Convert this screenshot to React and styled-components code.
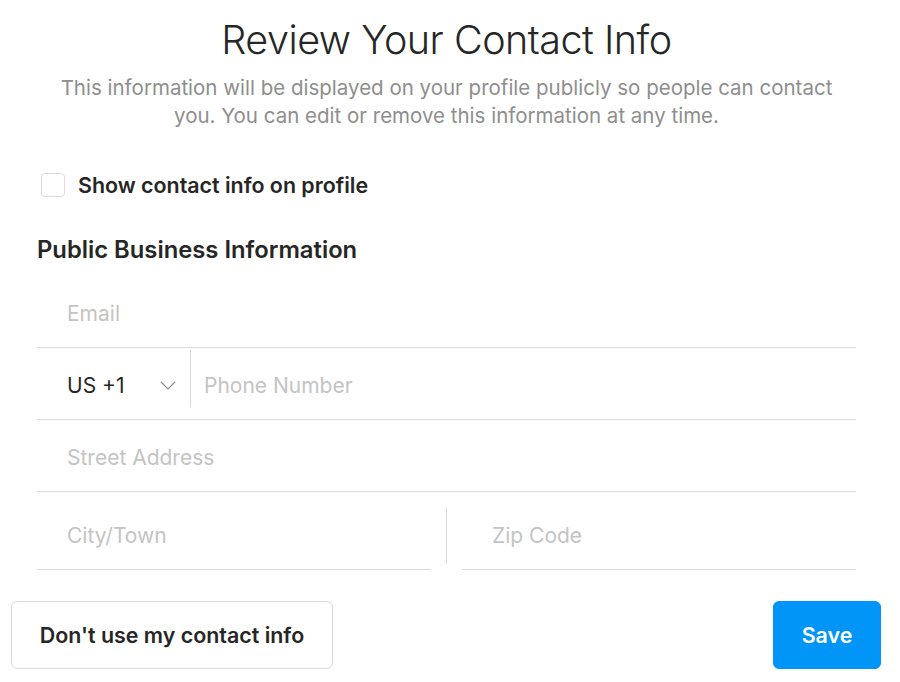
import React from 'react'
import styled, { createGlobalStyle } from 'styled-components'

const GlobalStyle = createGlobalStyle`
	html, body {
		margin: 0;
		padding: 0;
		background: #ffffff;
	}
	body {
		font-family: Inter, "Noto Sans", "Liberation Sans", sans-serif;
		color: #262626;
	}
`

const Page = styled.div`
	width: 900px;
	box-sizing: border-box;
	padding: 15px 19px 0 11px;
	display: flex;
	flex-direction: column;
`

const Form = styled.div`
	display: flex;
	flex-direction: column;
	padding: 0 25px 0 26px;
`

const Title = styled.h1`
	margin: 0;
	font-size: 39.5px;
	line-height: 50px;
	font-weight: 300;
	text-align: center;
	color: #262626;
	letter-spacing: -0.5px;
`

const Subtitle = styled.p`
	margin: 9px auto 0;
	width: 790px;
	font-size: 20.5px;
	line-height: 28px;
	color: #8e8e8e;
	text-align: center;
`

const CheckRow = styled.label`
	display: flex;
	align-items: center;
	gap: 13px;
	margin-top: 42px;
	padding-left: 4px;
	height: 26px;
	font-size: 21.4px;
	font-weight: 600;
	color: #262626;
	cursor: pointer;
`

const Box = styled.span`
	width: 24px;
	height: 24px;
	box-sizing: border-box;
	border: 1px solid #dbdbdb;
	border-radius: 4px;
	background: #fff;
`

const SectionTitle = styled.h2`
	margin: 37px 0 0;
	font-size: 23.8px;
	line-height: 30px;
	font-weight: 600;
	color: #262626;
`

const Fields = styled.div`
	display: flex;
	flex-direction: column;
	margin-top: 11px;
`

const Field = styled.div`
	display: flex;
	align-items: center;
	height: 72px;
	box-sizing: border-box;
	padding-top: 3px;
	border-bottom: 1px solid #dbdbdb;
	flex: ${p => (p.$half ? '1 1 0' : 'none')};
`

const Input = styled.input`
	flex: 1;
	min-width: 0;
	border: none;
	outline: none;
	background: transparent;
	font-family: inherit;
	font-size: 21px;
	color: #262626;
	padding: 0 0 0 ${p => p.$indent || 30}px;

	&::placeholder {
		color: #c4c4c4;
	}
`

const Country = styled.div`
	display: flex;
	align-items: center;
	justify-content: space-between;
	width: 153px;
	box-sizing: border-box;
	padding: 0 14px 0 30px;
	font-size: 21px;
	color: #262626;
	align-self: stretch;
`

const VDivider = styled.span`
	width: 1px;
	background: #dbdbdb;
	align-self: stretch;
	margin: ${p => p.$margin};
`

const SplitRow = styled.div`
	display: flex;
	margin-top: 6px;
`

const Actions = styled.div`
	display: flex;
	justify-content: space-between;
	margin-top: 31px;
`

const Button = styled.button`
	height: 68px;
	width: ${p => p.$width}px;
	box-sizing: border-box;
	border-radius: 6px;
	font-family: inherit;
	font-size: 21.4px;
	font-weight: 600;
	cursor: pointer;
	border: 1px solid ${p => (p.$primary ? '#0095f6' : '#dbdbdb')};
	background: ${p => (p.$primary ? '#0095f6' : '#ffffff')};
	color: ${p => (p.$primary ? '#ffffff' : '#262626')};
`

const Chevron = () => (
	<svg width="16" height="9" viewBox="0 0 16 9" fill="none">
		<polyline points="1,1 8,8 15,1" stroke="#8e8e8e" strokeWidth="1.2" />
	</svg>
)

const App = () => {
	return (
		<Page>
			<GlobalStyle />
			<Form>
				<Title>Review Your Contact Info</Title>
				<Subtitle>
					This information will be displayed on your profile publicly so people can contact
					you. You can edit or remove this information at any time.
				</Subtitle>

				<CheckRow>
					<Box />
					Show contact info on profile
				</CheckRow>

				<SectionTitle>Public Business Information</SectionTitle>

				<Fields>
					<Field>
						<Input placeholder='Email' />
					</Field>
					<Field>
						<Country>
							<span>US +1</span>
							<Chevron />
						</Country>
						<VDivider $margin='-1px 0 12px' />
						<Input placeholder='Phone Number' $indent={13} />
					</Field>
					<Field>
						<Input placeholder='Street Address' />
					</Field>
					<SplitRow>
						<Field $half>
							<Input placeholder='City/Town' />
						</Field>
						<VDivider $margin='10px 15px 7px' />
						<Field $half>
							<Input placeholder='Zip Code' />
						</Field>
					</SplitRow>
				</Fields>
			</Form>

			<Actions>
				<Button $width={322}>Don't use my contact info</Button>
				<Button $width={108} $primary>
					Save
				</Button>
			</Actions>
		</Page>
	)
}

export default App
